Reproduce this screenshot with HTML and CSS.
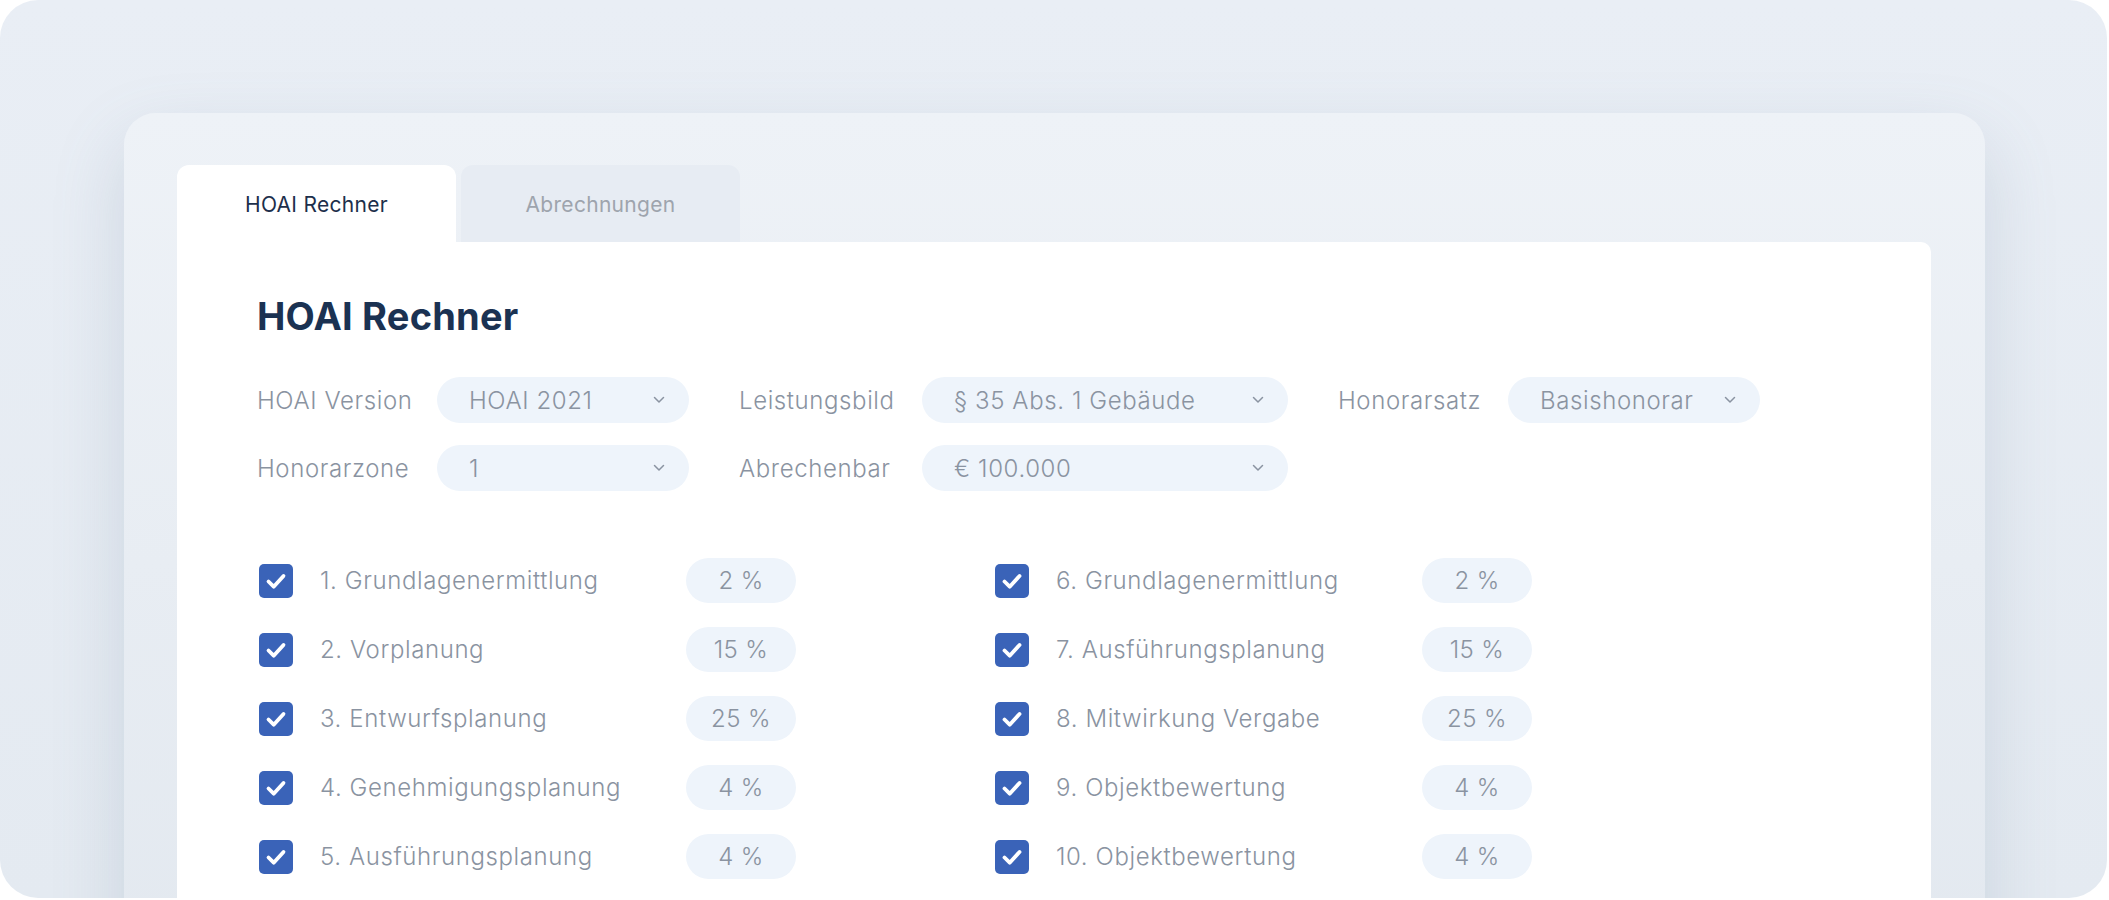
FILE: index.html
```html
<!DOCTYPE html>
<html lang="de">
<head>
    <meta charset="UTF-8">
    <meta name="viewport" content="width=device-width, initial-scale=1.0">
    <title>HOAI Rechner</title>
    <link rel="stylesheet" href="styles.css">
</head>
<body>
    <div class="backdrop">
        <div class="frame">
            <div class="tabs">
                <div class="tab active">HOAI Rechner</div>
                <div class="tab">Abrechnungen</div>
            </div>
            <div class="card">
                <h1>HOAI Rechner</h1>

                <div class="fields">
                    <div class="field">
                        <span class="field-label">HOAI Version</span>
                        <div class="select w-sm">HOAI 2021<svg class="chev" viewBox="0 0 12 8"><path d="M1.5 1.5l4.5 4.5 4.5-4.5"/></svg></div>
                    </div>
                    <div class="field">
                        <span class="field-label">Leistungsbild</span>
                        <div class="select w-lg">§ 35 Abs. 1 Gebäude<svg class="chev" viewBox="0 0 12 8"><path d="M1.5 1.5l4.5 4.5 4.5-4.5"/></svg></div>
                    </div>
                    <div class="field">
                        <span class="field-label">Honorarsatz</span>
                        <div class="select w-sm">Basishonorar<svg class="chev" viewBox="0 0 12 8"><path d="M1.5 1.5l4.5 4.5 4.5-4.5"/></svg></div>
                    </div>
                    <div class="field">
                        <span class="field-label">Honorarzone</span>
                        <div class="select w-sm">1<svg class="chev" viewBox="0 0 12 8"><path d="M1.5 1.5l4.5 4.5 4.5-4.5"/></svg></div>
                    </div>
                    <div class="field">
                        <span class="field-label">Abrechenbar</span>
                        <div class="select w-lg">€ 100.000<svg class="chev" viewBox="0 0 12 8"><path d="M1.5 1.5l4.5 4.5 4.5-4.5"/></svg></div>
                    </div>
                </div>

                <div class="phases" id="phases"></div>
            </div>
        </div>
    </div>

    <script>
        const phases = [
            ['1. Grundlagenermittlung', 2],
            ['6. Grundlagenermittlung', 2],
            ['2. Vorplanung', 15],
            ['7. Ausführungsplanung', 15],
            ['3. Entwurfsplanung', 25],
            ['8. Mitwirkung Vergabe', 25],
            ['4. Genehmigungsplanung', 4],
            ['9. Objektbewertung', 4],
            ['5. Ausführungsplanung', 4],
            ['10. Objektbewertung', 4]
        ];

        const list = document.getElementById('phases');
        phases.forEach(([name, pct]) => {
            const row = document.createElement('div');
            row.className = 'phase';
            row.innerHTML = `<span class="check"><svg viewBox="0 0 34 34"><path d="M9.5 17.5l5.2 5.2 9.8-10.7"/></svg></span><span class="phase-name">${name}</span><span class="pill">${pct} %</span>`;
            list.appendChild(row);
        });
    </script>
</body>
</html>
```

FILE: styles.css
```css
body {
    margin: 0;
    background: #fff;
    font-family: Inter, "Open Sans", sans-serif;
    overflow: hidden;
    height: 900px;
}
.backdrop {
    width: 2107px;
    height: 898px;
    border-radius: 38px;
    background: linear-gradient(180deg, #e9eef5 0%, #e4eaf1 100%);
    padding: 113px 0 0 124px;
    box-sizing: border-box;
    overflow: hidden;
}
.frame {
    width: 1861px;
    height: 900px;
    border-radius: 32px 32px 0 0;
    background: linear-gradient(180deg, #eef2f7 0%, #e2e8ef 100%);
    box-shadow: 0 30px 70px rgba(110, 130, 160, 0.22);
    padding: 52px 54px 0 53px;
    box-sizing: border-box;
}
.tabs {
    display: flex;
    gap: 5px;
}
.tab {
    width: 279px;
    height: 77px;
    border-radius: 12px 12px 0 0;
    background: #e7ecf3;
    color: #9ea4ad;
    font-size: 21px;
    letter-spacing: 0.3px;
    display: flex;
    align-items: center;
    justify-content: center;
    padding-top: 2px;
    box-sizing: border-box;
}
.tab.active {
    background: #fff;
    color: #1d2f4b;
}
.card {
    background: #fff;
    border-radius: 0 10px 0 0;
    height: 700px;
    padding: 51px 80px 0;
}
h1 {
    margin: 0;
    font-size: 38px;
    font-weight: 700;
    color: #1b3252;
    letter-spacing: 0.2px;
}
.fields {
    display: grid;
    grid-template-columns: 432px 549px 422px;
    column-gap: 50px;
    row-gap: 22px;
    margin-top: 38px;
}
.field {
    display: flex;
    align-items: center;
    justify-content: space-between;
}
.field-label {
    color: #8a93a1;
    font-size: 24px;
    font-weight: 300;
    letter-spacing: 0.6px;
}
.select {
    height: 46px;
    border-radius: 23px;
    background: #eef4fb;
    color: #8a93a1;
    font-size: 24px;
    font-weight: 300;
    letter-spacing: 0.6px;
    display: flex;
    align-items: center;
    justify-content: space-between;
    padding: 0 24px 0 32px;
    box-sizing: border-box;
}
.w-sm { width: 252px; }
.w-lg { width: 366px; }
.chev {
    width: 12px;
    height: 8px;
    fill: none;
    stroke: #8a93a1;
    stroke-width: 1.5;
    stroke-linecap: round;
    stroke-linejoin: round;
}
.phases {
    display: grid;
    grid-template-columns: 537px 537px;
    column-gap: 199px;
    row-gap: 24px;
    margin-top: 67px;
    margin-left: 2px;
}
.phase {
    display: flex;
    align-items: center;
}
.check {
    width: 34px;
    height: 34px;
    border-radius: 5px;
    background: #3a63b8;
    display: flex;
}
.check svg {
    width: 34px;
    height: 34px;
    fill: none;
    stroke: #fff;
    stroke-width: 3.8;
    stroke-linecap: round;
    stroke-linejoin: round;
}
.phase-name {
    flex: 1;
    margin-left: 27px;
    color: #8a93a1;
    font-size: 24px;
    font-weight: 300;
    letter-spacing: 0.6px;
}
.pill {
    width: 110px;
    height: 45px;
    border-radius: 23px;
    background: #eef4fb;
    color: #8a93a1;
    font-size: 24px;
    font-weight: 300;
    letter-spacing: 0.4px;
    display: flex;
    align-items: center;
    justify-content: center;
}
```
